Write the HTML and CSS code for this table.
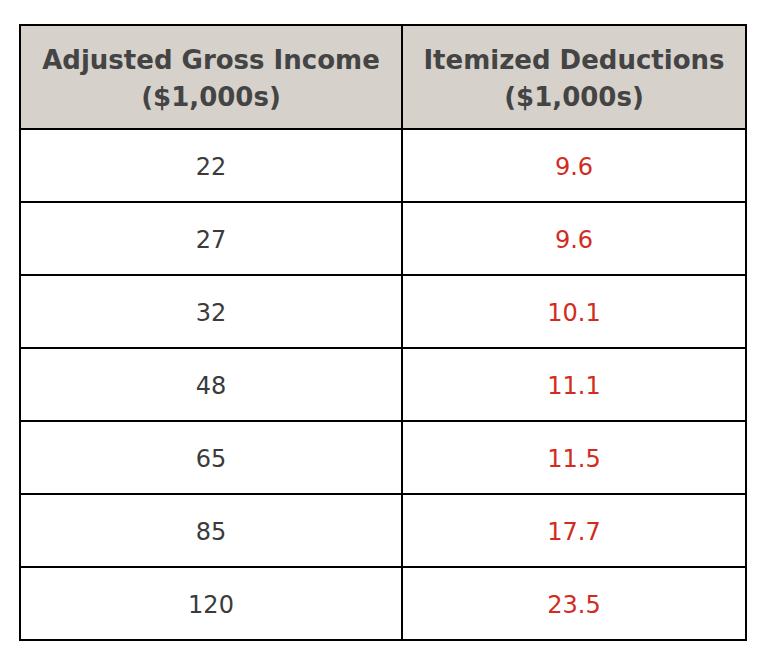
FILE: index.html
```html
<!DOCTYPE html>
<html lang="en">
<head>
<meta charset="utf-8">
<title>Itemized Deductions</title>
<link rel="stylesheet" href="styles.css">
</head>
<body>
<table class="data-table">
  <colgroup>
    <col class="col-income">
    <col class="col-deduct">
  </colgroup>
  <thead>
    <tr class="head-row">
      <th>Adjusted Gross Income<br>($1,000s)</th>
      <th>Itemized Deductions<br>($1,000s)</th>
    </tr>
  </thead>
  <tbody>
    <tr><td>22</td><td class="red">9.6</td></tr>
    <tr><td>27</td><td class="red">9.6</td></tr>
    <tr><td>32</td><td class="red">10.1</td></tr>
    <tr><td>48</td><td class="red">11.1</td></tr>
    <tr><td>65</td><td class="red">11.5</td></tr>
    <tr><td>85</td><td class="red">17.7</td></tr>
    <tr><td>120</td><td class="red">23.5</td></tr>
  </tbody>
</table>
</body>
</html>
```

FILE: styles.css
```css
html, body {
  margin: 0;
  padding: 0;
  background: #ffffff;
}

body {
  padding: 24px 19px;
  font-family: "DejaVu Sans", Verdana, sans-serif;
}

.data-table {
  border-collapse: collapse;
  table-layout: fixed;
  width: 728px;
  border: 2px solid #000;
}

.col-income { width: 382px; }
.col-deduct { width: 344px; }

.data-table th,
.data-table td {
  border: 2px solid #000;
  text-align: center;
  vertical-align: middle;
  padding: 0;
}

.data-table th {
  background: #d6d2cb;
  color: #444444;
  font-weight: bold;
  font-size: 26px;
  line-height: 37px;
  height: 98px;
  padding-top: 4px;
}

.data-table td {
  color: #3b3b3b;
  font-size: 24px;
  line-height: 30px;
  height: 69px;
  padding-top: 2px;
}

.data-table td.red {
  color: #d22b20;
}
```
